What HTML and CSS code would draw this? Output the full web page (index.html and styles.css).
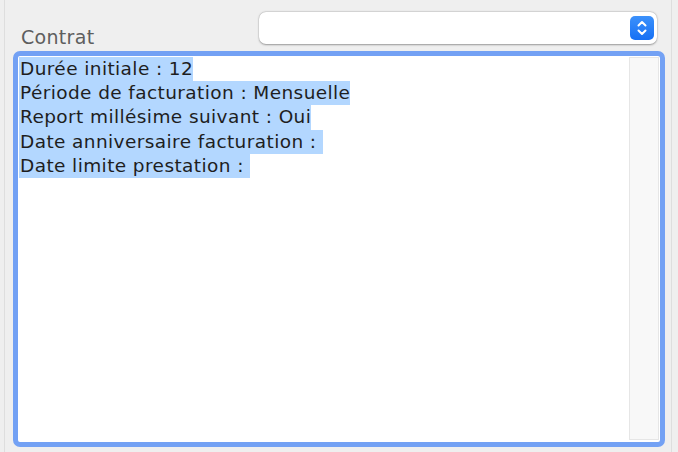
FILE: index.html
```html
<!DOCTYPE html>
<html lang="fr">
<head>
<meta charset="utf-8">
<title>Contrat</title>
<link rel="stylesheet" href="styles.css">
</head>
<body>
<div class="panel">
  <div class="header">
    <span class="label">Contrat</span>
    <div class="select">
      <span class="stepper">
        <svg width="24" height="24" viewBox="0 0 24 24"><path d="M8.5 9.5 L12 6 L15.5 9.5" fill="none" stroke="#fff" stroke-width="2" stroke-linecap="round" stroke-linejoin="round"/><path d="M8.5 14.5 L12 18 L15.5 14.5" fill="none" stroke="#fff" stroke-width="2" stroke-linecap="round" stroke-linejoin="round"/></svg>
      </span>
    </div>
  </div>
  <div class="textarea">
    <div class="content">
      <span class="sel">Durée initiale : 12</span>
      <span class="sel">Période de facturation : Mensuelle</span>
      <span class="sel">Report millésime suivant : Oui</span>
      <span class="sel">Date anniversaire facturation : </span>
      <span class="sel">Date limite prestation : </span>
    </div>
    <div class="track"></div>
  </div>
</div>
</body>
</html>
```
FILE: styles.css
```css
html, body {
  margin: 0;
  padding: 0;
  background: #efefef;
  height: 452px;
  overflow: hidden;
}
.panel {
  margin-left: 4px;
  width: 668px;
  height: 452px;
  border-left: 1px solid #dedede;
  border-right: 1px solid #dedede;
  padding: 12px 6px 0 8px;
  box-sizing: border-box;
  display: flex;
  flex-direction: column;
  font-family: "DejaVu Sans", sans-serif;
}
.header {
  display: flex;
  align-items: flex-end;
  justify-content: space-between;
  height: 32px;
}
.label {
  font-size: 19px;
  letter-spacing: 0.3px;
  color: #5e5e5e;
  margin-left: 8px;
  line-height: 19px;
  margin-bottom: -3px;
}
.select {
  width: 398px;
  height: 32px;
  margin-right: 8px;
  background: #fff;
  border-radius: 7px;
  box-shadow: 0 0.5px 2px rgba(0,0,0,0.35), 0 0 0 0.5px rgba(0,0,0,0.06);
  display: flex;
  align-items: center;
  justify-content: flex-end;
  padding-right: 3px;
  box-sizing: border-box;
}
.stepper {
  width: 24px;
  height: 24px;
  border-radius: 5px;
  background: linear-gradient(#3c91fb, #1670f4);
  display: flex;
}
.textarea {
  margin-top: 7px;
  height: 396px;
  border: 5px solid #73a1f4;
  border-radius: 7px;
  background: #fff;
  box-sizing: border-box;
  display: flex;
  padding: 1px 1px 2px 1px;
}
.content {
  flex: 1;
  display: flex;
  flex-direction: column;
  align-items: flex-start;
  font-size: 18.5px;
  letter-spacing: 0.4px;
  line-height: 24.2px;
  color: #1e1e1e;
}
.sel {
  background: #b3d7ff;
  padding-left: 1px;
  white-space: pre;
}
.track {
  width: 28px;
  background: #f8f8f8;
  border: 1px solid #e6e6e6;
}
```
